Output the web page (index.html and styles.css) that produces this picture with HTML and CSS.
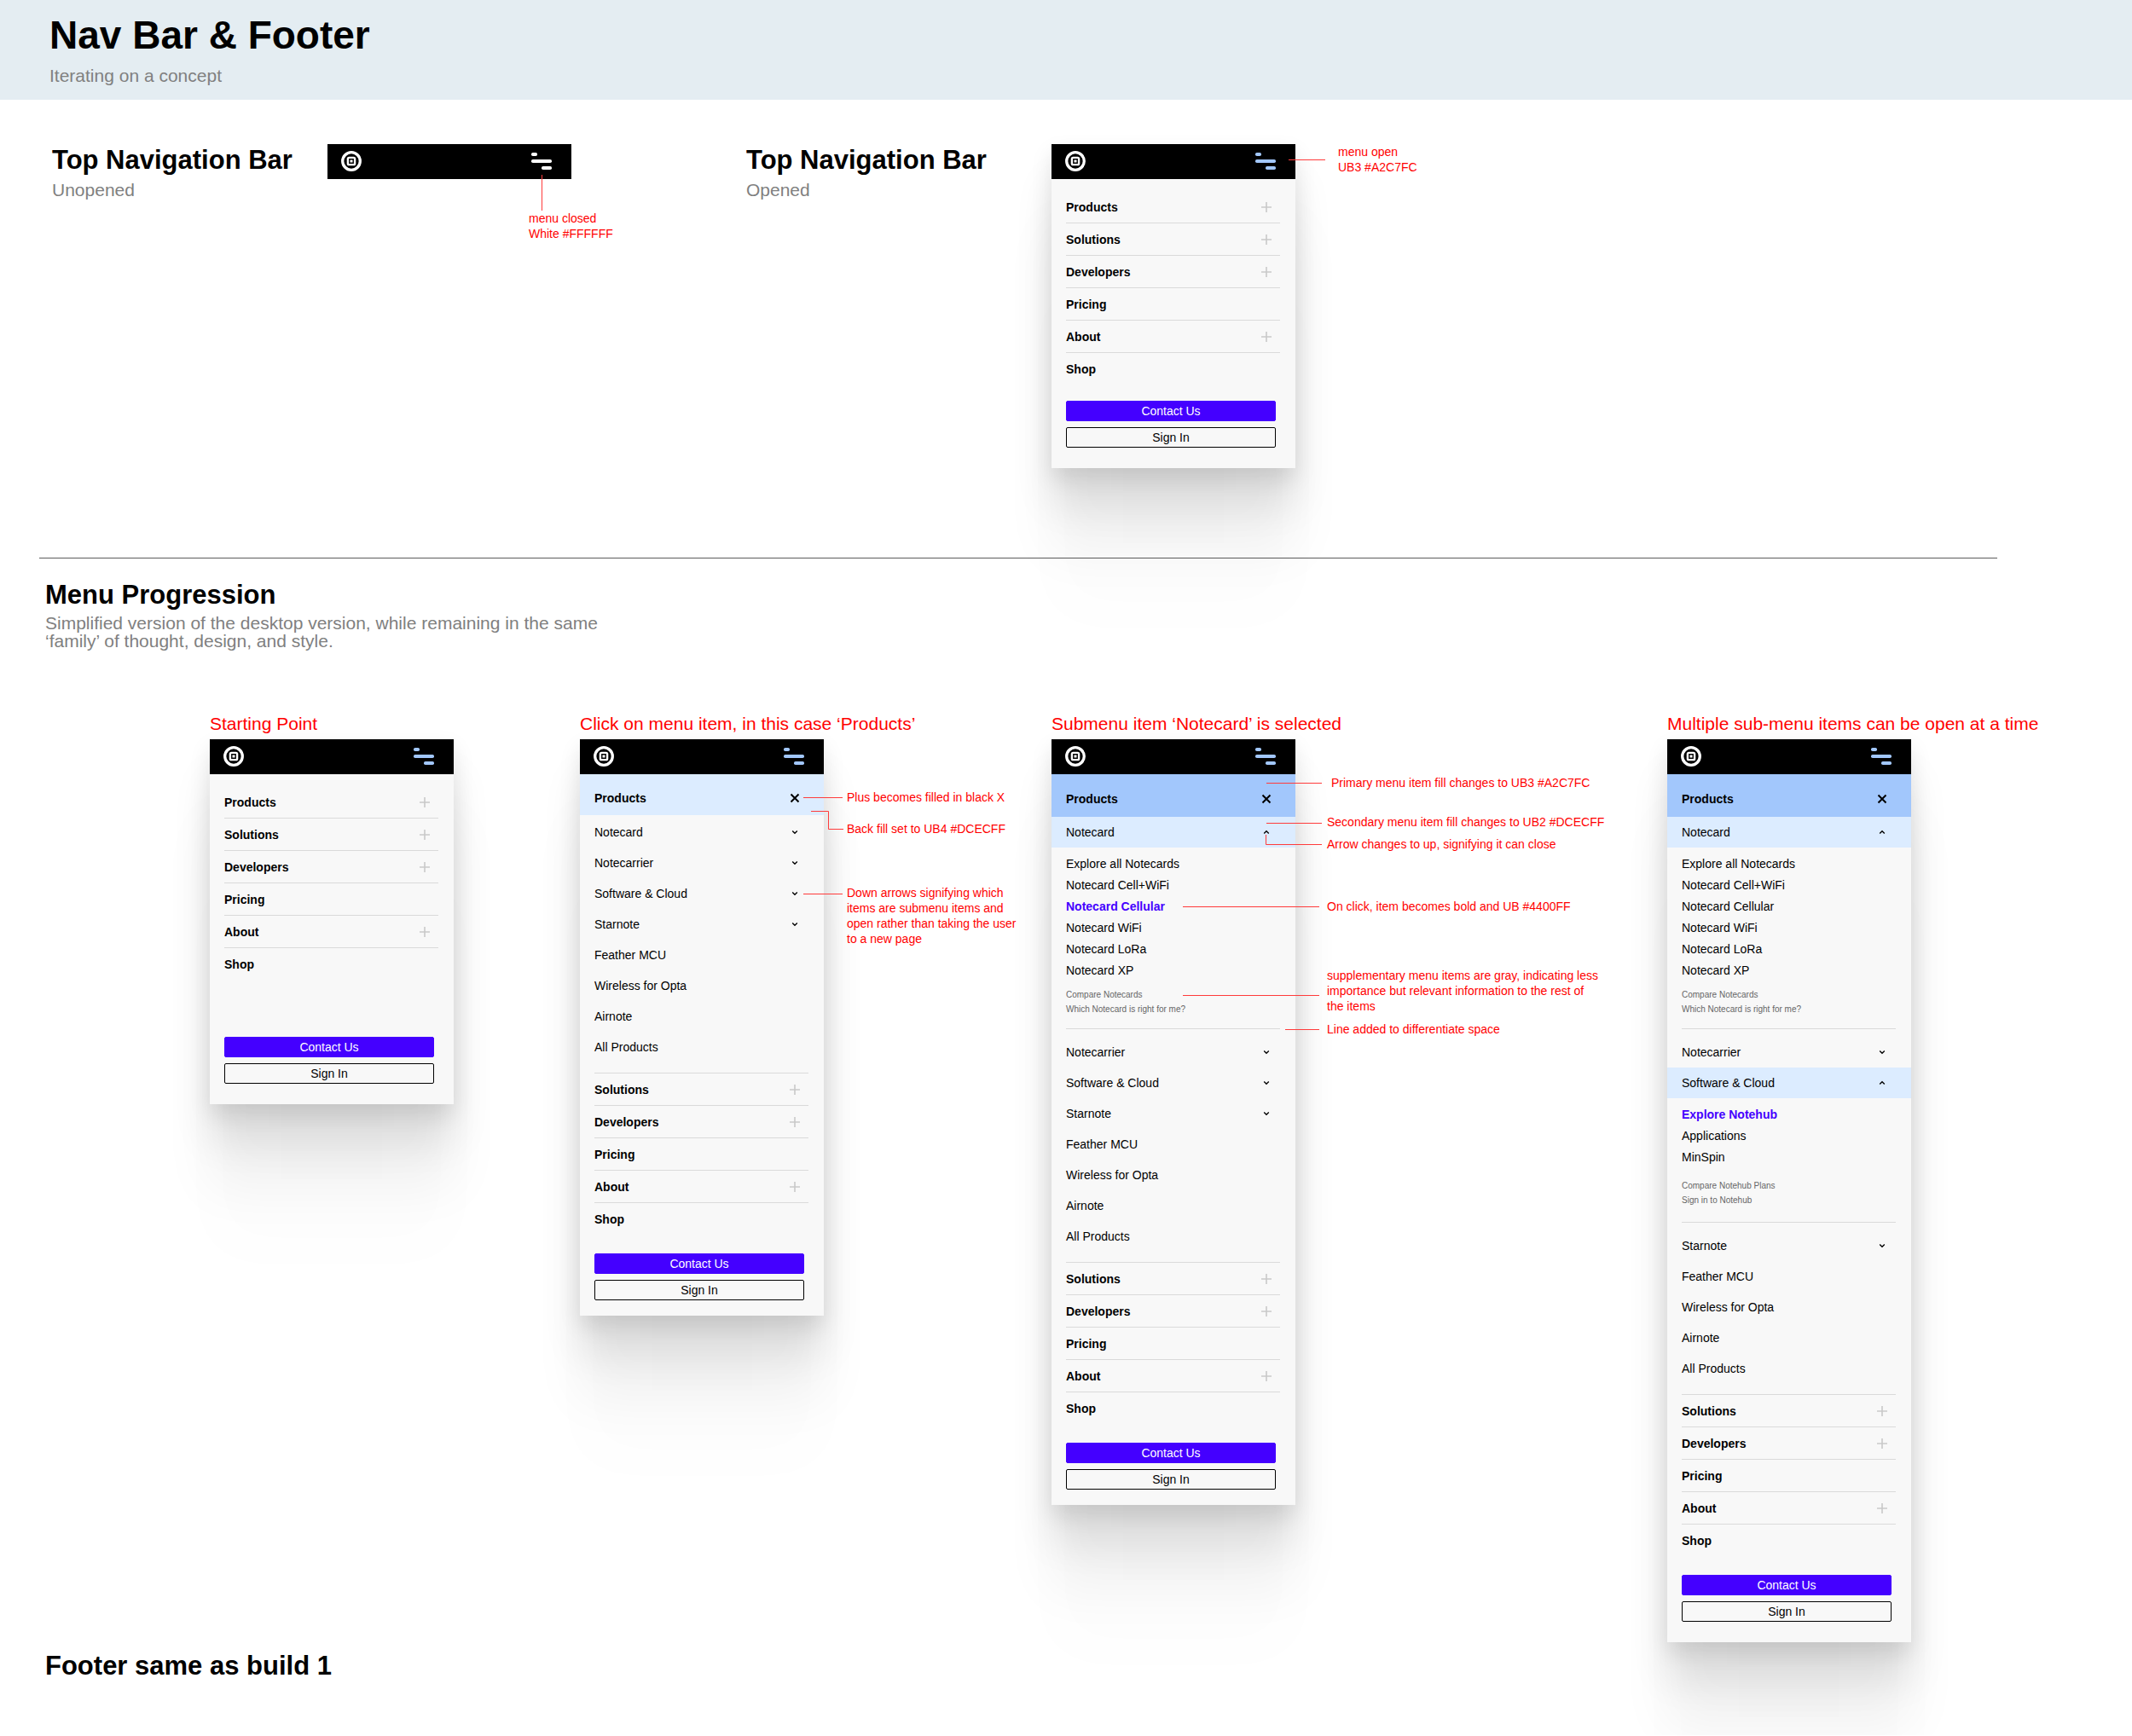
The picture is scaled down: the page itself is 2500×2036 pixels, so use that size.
FILE: index.html
```html
<!DOCTYPE html>
<html lang="en">
<head>
<meta charset="utf-8">
<meta name="viewport" content="width=device-width, initial-scale=1">
<title>Nav Bar &amp; Footer</title>
<link rel="stylesheet" href="styles.css">
</head>
<body>
<svg class="sprite" aria-hidden="true">
  <symbol id="logo" viewBox="0 0 24 24">
    <circle cx="12" cy="12" r="10.3" fill="none" stroke="#fff" stroke-width="3.3"/>
    <rect x="7.9" y="7.9" width="8.2" height="8.2" rx="1.4" fill="none" stroke="#fff" stroke-width="2.4"/>
    <rect x="10.5" y="10.5" width="3" height="3" fill="#fff"/>
  </symbol>
  <symbol id="burger" viewBox="0 0 24 24">
    <rect x="0" y="2" width="7" height="4" rx="1.8"/>
    <rect x="0" y="10" width="24" height="4" rx="1.8"/>
    <rect x="12" y="18" width="12" height="4" rx="1.8"/>
  </symbol>
  <symbol id="plus" viewBox="0 0 12 12"><path d="M6 0V12M0 6H12" fill="none" stroke="#c9c9c9" stroke-width="1.6"/></symbol>
  <symbol id="cross" viewBox="0 0 12 12"><path d="M1.5 1.5L10.5 10.5M10.5 1.5L1.5 10.5" fill="none" stroke="#000" stroke-width="2"/></symbol>
  <symbol id="down" viewBox="0 0 12 12"><path d="M3.2 4.6L6 7.2L8.8 4.6" fill="none" stroke="#000" stroke-width="1.4"/></symbol>
  <symbol id="up" viewBox="0 0 12 12"><path d="M3.2 7.4L6 4.8L8.8 7.4" fill="none" stroke="#000" stroke-width="1.4"/></symbol>
</svg>

<header class="page-head">
  <h1 class="page-title">Nav Bar &amp; Footer</h1>
  <p class="lede">Iterating on a concept</p>
</header>

<main>
  <section class="bars">
    <div class="intro">
      <h2 class="heading">Top Navigation Bar</h2>
      <p class="lede">Unopened</p>
    </div>
    <div class="phone">
      <div class="topbar topbar-closed">
        <a class="logo" href="#" aria-label="Home"><svg class="icon-lg"><use href="#logo"/></svg></a>
        <button class="burger" type="button" aria-label="Open menu"><svg class="icon-lg"><use href="#burger"/></svg></button>
      </div>
      <svg class="wires" aria-hidden="true"><path d="M251.5 36V78"/></svg>
      <p class="note note-closed">menu closed<br>White #FFFFFF</p>
    </div>
    <div class="intro">
      <h2 class="heading">Top Navigation Bar</h2>
      <p class="lede">Opened</p>
    </div>
    <div class="phone phone-raised">
      <div class="topbar">
        <a class="logo" href="#" aria-label="Home"><svg class="icon-lg"><use href="#logo"/></svg></a>
        <button class="burger" type="button" aria-label="Close menu"><svg class="icon-lg"><use href="#burger"/></svg></button>
      </div>
      <nav class="panel">
        <ul class="menu menu-first">
          <li><button class="row" type="button">Products<svg class="icon"><use href="#plus"/></svg></button></li>
          <li><button class="row" type="button">Solutions<svg class="icon"><use href="#plus"/></svg></button></li>
          <li><button class="row" type="button">Developers<svg class="icon"><use href="#plus"/></svg></button></li>
          <li><a class="row" href="#">Pricing</a></li>
          <li><button class="row" type="button">About<svg class="icon"><use href="#plus"/></svg></button></li>
          <li><a class="row" href="#">Shop</a></li>
        </ul>
        <div class="actions">
          <button class="btn btn-primary" type="button">Contact Us</button>
          <button class="btn" type="button">Sign In</button>
        </div>
      </nav>
      <svg class="wires" aria-hidden="true"><path d="M278 18.5H321"/></svg>
      <p class="note note-open">menu open<br>UB3 #A2C7FC</p>
    </div>
  </section>

  <hr class="rule">

  <section>
    <div class="progress-head">
      <h2 class="heading">Menu Progression</h2>
      <p class="lede lede-tight">Simplified version of the desktop version, while remaining in the same<br>‘family’ of thought, design, and style.</p>
    </div>

    <div class="steps">
      <div class="step">
        <h3 class="step-title">Starting Point</h3>
        <div class="phone phone-raised">
          <div class="topbar">
            <a class="logo" href="#" aria-label="Home"><svg class="icon-lg"><use href="#logo"/></svg></a>
            <button class="burger" type="button" aria-label="Close menu"><svg class="icon-lg"><use href="#burger"/></svg></button>
          </div>
          <nav class="panel">
            <ul class="menu menu-first">
              <li><button class="row" type="button">Products<svg class="icon"><use href="#plus"/></svg></button></li>
              <li><button class="row" type="button">Solutions<svg class="icon"><use href="#plus"/></svg></button></li>
              <li><button class="row" type="button">Developers<svg class="icon"><use href="#plus"/></svg></button></li>
              <li><a class="row" href="#">Pricing</a></li>
              <li><button class="row" type="button">About<svg class="icon"><use href="#plus"/></svg></button></li>
              <li><a class="row" href="#">Shop</a></li>
            </ul>
            <div class="actions actions-far">
              <button class="btn btn-primary" type="button">Contact Us</button>
              <button class="btn" type="button">Sign In</button>
            </div>
          </nav>
        </div>
      </div>

      <div class="step">
        <h3 class="step-title">Click on menu item, in this case ‘Products’</h3>
        <div class="phone phone-raised">
          <div class="topbar">
            <a class="logo" href="#" aria-label="Home"><svg class="icon-lg"><use href="#logo"/></svg></a>
            <button class="burger" type="button" aria-label="Close menu"><svg class="icon-lg"><use href="#burger"/></svg></button>
          </div>
          <nav class="panel panel-short">
            <button class="row band-top" type="button">Products<svg class="icon"><use href="#cross"/></svg></button>
            <ul class="submenu submenu-first">
              <li><button class="subrow" type="button">Notecard<svg class="icon"><use href="#down"/></svg></button></li>
              <li><button class="subrow" type="button">Notecarrier<svg class="icon"><use href="#down"/></svg></button></li>
              <li><button class="subrow" type="button">Software &amp; Cloud<svg class="icon"><use href="#down"/></svg></button></li>
              <li><button class="subrow" type="button">Starnote<svg class="icon"><use href="#down"/></svg></button></li>
              <li><a class="subrow" href="#">Feather MCU</a></li>
              <li><a class="subrow" href="#">Wireless for Opta</a></li>
              <li><a class="subrow" href="#">Airnote</a></li>
              <li><a class="subrow" href="#">All Products</a></li>
            </ul>
            <ul class="menu menu-rest">
              <li><button class="row" type="button">Solutions<svg class="icon"><use href="#plus"/></svg></button></li>
              <li><button class="row" type="button">Developers<svg class="icon"><use href="#plus"/></svg></button></li>
              <li><a class="row" href="#">Pricing</a></li>
              <li><button class="row" type="button">About<svg class="icon"><use href="#plus"/></svg></button></li>
              <li><a class="row" href="#">Shop</a></li>
            </ul>
            <div class="actions actions-near">
              <button class="btn btn-primary" type="button">Contact Us</button>
              <button class="btn" type="button">Sign In</button>
            </div>
          </nav>
          <svg class="wires" aria-hidden="true"><path d="M262 68.5H308M271 84.5H291.5V105.5H309M262 181.5H308"/></svg>
          <p class="note note-cross">Plus becomes filled in black X</p>
          <p class="note note-fill">Back fill set to UB4 #DCECFF</p>
          <p class="note note-arrows">Down arrows signifying which<br>items are submenu items and<br>open rather than taking the user<br>to a new page</p>
        </div>
      </div>

      <div class="step">
        <h3 class="step-title">Submenu item ‘Notecard’ is selected</h3>
        <div class="phone phone-raised">
          <div class="topbar">
            <a class="logo" href="#" aria-label="Home"><svg class="icon-lg"><use href="#logo"/></svg></a>
            <button class="burger" type="button" aria-label="Close menu"><svg class="icon-lg"><use href="#burger"/></svg></button>
          </div>
          <nav class="panel panel-short">
            <button class="row band-top band-deep" type="button">Products<svg class="icon"><use href="#cross"/></svg></button>
            <button class="subrow subrow-open" type="button">Notecard<svg class="icon"><use href="#up"/></svg></button>
            <div class="drawer">
              <ul class="links">
                <li><a href="#">Explore all Notecards</a></li>
                <li><a href="#">Notecard Cell+WiFi</a></li>
                <li><a class="current" href="#">Notecard Cellular</a></li>
                <li><a href="#">Notecard WiFi</a></li>
                <li><a href="#">Notecard LoRa</a></li>
                <li><a href="#">Notecard XP</a></li>
              </ul>
              <ul class="extras">
                <li><a href="#">Compare Notecards</a></li>
                <li><a href="#">Which Notecard is right for me?</a></li>
              </ul>
            </div>
            <ul class="submenu">
              <li><button class="subrow" type="button">Notecarrier<svg class="icon"><use href="#down"/></svg></button></li>
              <li><button class="subrow" type="button">Software &amp; Cloud<svg class="icon"><use href="#down"/></svg></button></li>
              <li><button class="subrow" type="button">Starnote<svg class="icon"><use href="#down"/></svg></button></li>
              <li><a class="subrow" href="#">Feather MCU</a></li>
              <li><a class="subrow" href="#">Wireless for Opta</a></li>
              <li><a class="subrow" href="#">Airnote</a></li>
              <li><a class="subrow" href="#">All Products</a></li>
            </ul>
            <ul class="menu menu-rest">
              <li><button class="row" type="button">Solutions<svg class="icon"><use href="#plus"/></svg></button></li>
              <li><button class="row" type="button">Developers<svg class="icon"><use href="#plus"/></svg></button></li>
              <li><a class="row" href="#">Pricing</a></li>
              <li><button class="row" type="button">About<svg class="icon"><use href="#plus"/></svg></button></li>
              <li><a class="row" href="#">Shop</a></li>
            </ul>
            <div class="actions actions-near">
              <button class="btn btn-primary" type="button">Contact Us</button>
              <button class="btn" type="button">Sign In</button>
            </div>
          </nav>
          <svg class="wires" aria-hidden="true"><path d="M252 51.5H317M252 98.5H317M251.5 112V123.5H317M154 196.5H314M154 300.5H314M274 340.5H314"/></svg>
          <p class="note note-primary">Primary menu item fill changes to UB3 #A2C7FC</p>
          <p class="note note-secondary">Secondary menu item fill changes to UB2 #DCECFF</p>
          <p class="note note-up">Arrow changes to up, signifying it can close</p>
          <p class="note note-current">On click, item becomes bold and UB #4400FF</p>
          <p class="note note-extras">supplementary menu items are gray, indicating less<br>importance but relevant information to the rest of<br>the items</p>
          <p class="note note-line">Line added to differentiate space</p>
        </div>
      </div>

      <div class="step">
        <h3 class="step-title">Multiple sub-menu items can be open at a time</h3>
        <div class="phone phone-raised">
          <div class="topbar">
            <a class="logo" href="#" aria-label="Home"><svg class="icon-lg"><use href="#logo"/></svg></a>
            <button class="burger" type="button" aria-label="Close menu"><svg class="icon-lg"><use href="#burger"/></svg></button>
          </div>
          <nav class="panel">
            <button class="row band-top band-deep" type="button">Products<svg class="icon"><use href="#cross"/></svg></button>
            <button class="subrow subrow-open" type="button">Notecard<svg class="icon"><use href="#up"/></svg></button>
            <div class="drawer">
              <ul class="links">
                <li><a href="#">Explore all Notecards</a></li>
                <li><a href="#">Notecard Cell+WiFi</a></li>
                <li><a href="#">Notecard Cellular</a></li>
                <li><a href="#">Notecard WiFi</a></li>
                <li><a href="#">Notecard LoRa</a></li>
                <li><a href="#">Notecard XP</a></li>
              </ul>
              <ul class="extras">
                <li><a href="#">Compare Notecards</a></li>
                <li><a href="#">Which Notecard is right for me?</a></li>
              </ul>
            </div>
            <ul class="submenu">
              <li><button class="subrow" type="button">Notecarrier<svg class="icon"><use href="#down"/></svg></button></li>
              <li><button class="subrow subrow-open" type="button">Software &amp; Cloud<svg class="icon"><use href="#up"/></svg></button></li>
            </ul>
            <div class="drawer">
              <ul class="links">
                <li><a class="current" href="#">Explore Notehub</a></li>
                <li><a href="#">Applications</a></li>
                <li><a href="#">MinSpin</a></li>
              </ul>
              <ul class="extras extras-roomy">
                <li><a href="#">Compare Notehub Plans</a></li>
                <li><a href="#">Sign in to Notehub</a></li>
              </ul>
            </div>
            <ul class="submenu">
              <li><button class="subrow" type="button">Starnote<svg class="icon"><use href="#down"/></svg></button></li>
              <li><a class="subrow" href="#">Feather MCU</a></li>
              <li><a class="subrow" href="#">Wireless for Opta</a></li>
              <li><a class="subrow" href="#">Airnote</a></li>
              <li><a class="subrow" href="#">All Products</a></li>
            </ul>
            <ul class="menu menu-rest">
              <li><button class="row" type="button">Solutions<svg class="icon"><use href="#plus"/></svg></button></li>
              <li><button class="row" type="button">Developers<svg class="icon"><use href="#plus"/></svg></button></li>
              <li><a class="row" href="#">Pricing</a></li>
              <li><button class="row" type="button">About<svg class="icon"><use href="#plus"/></svg></button></li>
              <li><a class="row" href="#">Shop</a></li>
            </ul>
            <div class="actions actions-near">
              <button class="btn btn-primary" type="button">Contact Us</button>
              <button class="btn" type="button">Sign In</button>
            </div>
          </nav>
        </div>
      </div>
    </div>
  </section>

  <h2 class="heading closing">Footer same as build 1</h2>
</main>
</body>
</html>
```
FILE: styles.css
```css
:root {
  --ub: #4400ff;
  --ub3: #a2c7fc;
  --ub4: #dcecff;
  --panel: #f8f8f8;
  --line: #dadada;
  --note: #ff0000;
}

* {
  box-sizing: border-box;
}

body {
  margin: 0;
  background: #fff;
  color: #000;
  font-family: "Liberation Sans", Arial, sans-serif;
  font-size: 14px;
}

h1, h2, h3, p, ul {
  margin: 0;
  padding: 0;
}

ul {
  list-style: none;
}

a {
  color: inherit;
  text-decoration: none;
}

button {
  margin: 0;
  padding: 0;
  border: 0;
  background: none;
  color: inherit;
  font: inherit;
  text-align: left;
}

.sprite {
  display: none;
}

/* Page headings */

.page-head {
  padding: 15px 58px;
  background: #e4edf2;
}

.page-title {
  margin-bottom: 9px;
  font-size: 46px;
  line-height: 52px;
}

.heading {
  margin-bottom: 4px;
  font-size: 31px;
  line-height: 36px;
}

.lede {
  color: #808080;
  font-size: 21px;
  line-height: 26px;
}

.lede-tight {
  line-height: 21px;
}

.rule {
  margin: 105px 158px 25px 46px;
  border: 0;
  border-top: 1px solid #5c5c5c;
}

.progress-head {
  padding-left: 53px;
}

.closing {
  margin: 10px 0 0;
  padding: 0 53px 63px;
}

/* Column layouts */

.bars {
  display: grid;
  grid-template-columns: 323fr 491fr 358fr 1267fr;
  padding: 52px 0 0 61px;
}

.intro {
  padding-top: 1px;
}

.steps {
  display: grid;
  grid-template-columns: 434fr 553fr 722fr 545fr;
  padding: 74px 0 0 246px;
}

.step-title {
  margin-bottom: 5px;
  color: var(--note);
  font-size: 21px;
  font-weight: 400;
  line-height: 26px;
  white-space: nowrap;
}

/* Phone */

.phone {
  position: relative;
  align-self: start;
  width: 286px;
}

.phone-raised {
  box-shadow:
    0 11px 24px rgba(0, 0, 0, 0.1),
    0 43px 43px rgba(0, 0, 0, 0.09),
    0 97px 58px rgba(0, 0, 0, 0.05),
    0 172px 69px rgba(0, 0, 0, 0.01);
}

.topbar {
  display: flex;
  justify-content: space-between;
  padding: 8px 23px 9px 16px;
  background: #000;
}

.logo,
.burger {
  display: flex;
}

.burger {
  fill: var(--ub3);
}

.topbar-closed .burger {
  fill: #fff;
}

.icon-lg {
  width: 24px;
  height: 24px;
}

.icon {
  width: 12px;
  height: 12px;
}

.panel {
  padding-bottom: 24px;
  background: var(--panel);
}

.panel-short {
  padding-bottom: 18px;
}

/* Primary menu */

.menu {
  margin: 0 18px 0 17px;
}

.menu-first {
  padding-top: 14px;
}

.menu-rest {
  margin-top: 12px;
  border-top: 1px solid var(--line);
}

.menu li {
  height: 38px;
  border-bottom: 1px solid var(--line);
}

.menu li:last-child {
  border-bottom-color: transparent;
}

.row {
  display: flex;
  align-items: center;
  justify-content: space-between;
  width: 100%;
  height: 37px;
  padding-right: 10px;
  font-weight: 700;
}

.band-top {
  height: 48px;
  padding: 7px 28px 0 17px;
  background: var(--ub4);
}

.band-deep {
  height: 50px;
  background: var(--ub3);
}

/* Second level */

.submenu-first {
  padding-top: 2px;
}

.subrow {
  display: flex;
  align-items: center;
  justify-content: space-between;
  width: 100%;
  height: 36px;
  padding: 0 28px 0 17px;
}

.subrow-open {
  background: var(--ub4);
}

.drawer {
  margin: 0 18px 9px 17px;
  padding-top: 7px;
  border-bottom: 1px solid var(--line);
}

.links {
  line-height: 25px;
}

.current {
  color: var(--ub);
  font-weight: 700;
}

.extras {
  padding: 7px 0 14px;
  color: #666;
  font-size: 10px;
  line-height: 17px;
}

.extras-roomy {
  padding: 12px 0 17px;
}

/* Buttons */

.actions {
  display: flex;
  flex-direction: column;
  gap: 7px;
  padding: 18px 23px 0 17px;
}

.actions-near {
  padding-top: 21px;
}

.actions-far {
  padding-top: 66px;
}

.btn {
  height: 24px;
  border: 1px solid #000;
  border-radius: 2px;
  text-align: center;
}

.btn-primary {
  border-color: var(--ub);
  background: var(--ub);
  color: #fff;
}

/* Annotations laid over the phones */

.wires {
  position: absolute;
  top: 0;
  left: 0;
  width: 330px;
  height: 360px;
  fill: none;
  stroke: #ff3b3b;
  pointer-events: none;
}

.note {
  position: absolute;
  color: var(--note);
  line-height: 18px;
  white-space: nowrap;
}

.note-closed { top: 78px; left: 236px; }
.note-open { top: 0; left: 336px; }

.note-cross { top: 59px; left: 313px; }
.note-fill { top: 96px; left: 313px; }
.note-arrows { top: 171px; left: 313px; }

.note-primary { top: 42px; left: 328px; }
.note-secondary { top: 88px; left: 323px; }
.note-up { top: 114px; left: 323px; }
.note-current { top: 187px; left: 323px; }
.note-extras { top: 268px; left: 323px; }
.note-line { top: 331px; left: 323px; }
```
